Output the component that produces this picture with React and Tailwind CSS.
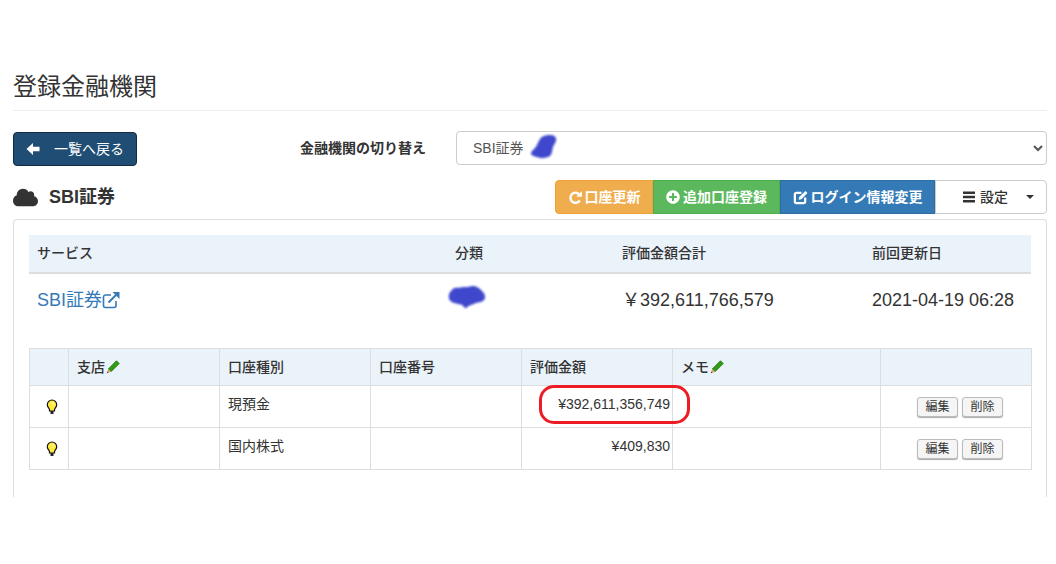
import React from 'react';
import { FaCloud, FaPlusCircle } from 'react-icons/fa';

const font = { fontFamily: '"Liberation Sans", "Noto Sans CJK JP", sans-serif' };

// 黒塗りの代わりの青いにじみ
function Blob({ className, d }) {
  return (
    <svg className={className} viewBox="0 0 40 30" aria-hidden="true">
      <path d={d} fill="#3f48cc" className="blur-[1px]" />
    </svg>
  );
}

function ArrowLeft() {
  return (
    <svg viewBox="0 0 14 14" className="w-[14px] h-[14px]" aria-hidden="true">
      <path d="M0.500 7L7 1v3.800h6.500v4.400H7V13z" fill="currentColor" />
    </svg>
  );
}

function RefreshIcon() {
  return (
    <svg viewBox="0 0 16 16" className="w-[15px] h-[15px]" aria-hidden="true">
      <path d="M12.600 11a5.400 5.400 0 1 1-.3-6" fill="none" stroke="currentColor" strokeWidth="2.600" />
      <path d="M14.800 1.200v6H8.800z" fill="currentColor" />
    </svg>
  );
}

function EditIcon() {
  return (
    <svg viewBox="0 0 16 16" className="w-[15px] h-[15px]" aria-hidden="true">
      <path d="M9 3H3.500A1.500 1.500 0 0 0 2 4.500v8A1.500 1.500 0 0 0 3.500 14h8a1.500 1.500 0 0 0 1.500-1.500V8" fill="none" stroke="currentColor" strokeWidth="2.400" />
      <path d="M13.200 1l2.200 2.200L9 9.800 6 10.400l.6-3z" fill="currentColor" />
    </svg>
  );
}

function BarsIcon() {
  return (
    <svg viewBox="0 0 12 12" className="w-[12px] h-[12px]" aria-hidden="true">
      <path d="M0 0.500h12v2.600H0zM0 4.700h12v2.600H0zM0 8.900h12v2.600H0z" fill="currentColor" />
    </svg>
  );
}

function ExternalIcon() {
  return (
    <svg viewBox="0 0 18 18" className="w-[18px] h-[18px] -mt-[2px]" aria-hidden="true">
      <path d="M9 4H3.500A2 2 0 0 0 1.500 6v8.500a2 2 0 0 0 2 2H12a2 2 0 0 0 2-2V10" fill="none" stroke="#337ab7" strokeWidth="1.600" />
      <path d="M6.500 11.500L14 4" fill="none" stroke="#337ab7" strokeWidth="2" />
      <path d="M10.500 1h7v7z" fill="#337ab7" />
    </svg>
  );
}

function Pencil() {
  return (
    <svg viewBox="0 0 14 14" className="w-[14px] h-[14px] inline-block ml-[1px] -mt-[1px]" aria-hidden="true">
      <path d="M10.500 0.800L13.200 3.500 5 11.700 2.300 9z" fill="#2f9e12" stroke="#1c6b0a" strokeWidth="0.800" />
      <path d="M2.300 9L5 11.700 0.800 13.200z" fill="#e0a36a" />
      <path d="M1.400 11.500L2.500 12.500 0.800 13.200z" fill="#333" />
    </svg>
  );
}

function Bulb() {
  return (
    <svg viewBox="0 0 12 16" className="w-[12px] h-[16px] ml-[16px]" aria-hidden="true">
      <path d="M6 1a4.700 4.700 0 0 0-4.700 4.700c0 2 1.300 3 2.200 4.800v1.500h5v-1.500c.9-1.800 2.200-2.800 2.200-4.800A4.700 4.700 0 0 0 6 1z" fill="#ffe93b" stroke="#111" strokeWidth="1.200" />
      <path d="M5 4.500a1.500 1.500 0 1 1 1.500 2" fill="none" stroke="#fffbd0" strokeWidth="1" />
      <path d="M4.500 12h3v3h-3z" fill="#222" />
    </svg>
  );
}

function SmallButtons() {
  const cls = "w-[41px] h-[20px] rounded-[3px] border border-[#bbb] bg-[#f5f5f5] shadow-[0_1px_1px_#aaa] text-[12px] leading-[18px] text-[#333]";
  return (
    <div className="flex justify-end gap-[4px] pr-[28px] pt-[1px]">
      <button className={cls}>編集</button>
      <button className={cls}>削除</button>
    </div>
  );
}

const thTop = "px-[8px] text-left font-medium text-[14px]";
const thSub = "border border-[#ddd] px-[8px] text-left font-medium text-[14px]";
const td = "border border-[#ddd] px-[8px] pt-[8px] align-top text-[14px] leading-[20px]";

export default function App() {
  return (
    <div style={font} className="w-[1056px] h-[564px] overflow-hidden bg-white text-[#333] pl-[13px] pr-[9px] pt-[70px]">
      <h1 className="text-[24px] leading-[34px] font-normal pb-[6px] border-b border-[#eee]">登録金融機関</h1>

      {/* 切り替え行 */}
      <div className="flex items-start mt-[20px]">
        <button className="mt-[1px] w-[124px] h-[34px] flex items-center pl-[12px] rounded-[4px] bg-[#204d74] border border-[#122b40] text-white text-[14px]">
          <ArrowLeft />
          <span className="ml-[14px]">一覧へ戻る</span>
        </button>
        <label className="ml-auto mt-[7px] text-[14px] leading-[20px] font-bold">金融機関の切り替え</label>
        <div className="relative ml-[30px] w-[591px]">
          <select style={font} className="w-full h-[34px] pl-[12px] rounded-[4px] border border-[#ccc] bg-white text-[#555] text-[14px]">
            <option>SBI証券</option>
          </select>
          <Blob className="absolute left-[68px] top-[-3px] w-[40px] h-[40px]" d="M26 2c4 0 7 2 6 6-1 3-2 3-3 6-1 4-1 9-5 10-4 1-7 2-11 0-3-1-6-1-6-4 1-3 4-4 6-8 2-4 3-8 7-9 2-1 4-1 6-1z" />
        </div>
      </div>

      {/* 口座見出し行 */}
      <div className="flex items-center justify-between mt-[14px] h-[34px]">
        <div className="flex items-center pt-[1px]">
          <FaCloud className="w-[25px] h-[25px] text-[#333]" />
          <span className="ml-[11px] text-[18px] font-bold">SBI証券</span>
        </div>
        <div className="flex text-[14px] font-bold text-white">
          <button className="w-[98px] h-[34px] flex items-center justify-center gap-[2px] rounded-l-[4px] bg-[#f0ad4e] border border-[#eea236]">
            <RefreshIcon />口座更新
          </button>
          <button className="w-[127px] h-[34px] flex items-center justify-center gap-[3px] bg-[#5cb85c] border border-[#4cae4c]">
            <FaPlusCircle className="w-[14px] h-[14px]" />追加口座登録
          </button>
          <button className="w-[155px] h-[34px] flex items-center justify-center gap-[3px] bg-[#337ab7] border border-[#2e6da4]">
            <EditIcon />ログイン情報変更
          </button>
          <button className="w-[112px] h-[34px] flex items-center pl-[27px] rounded-r-[4px] bg-white border border-[#ccc] text-[#333] font-medium">
            <BarsIcon />
            <span className="ml-[5px]">設定</span>
            <span className="ml-[18px] border-x-[4px] border-x-transparent border-t-[4px] border-t-[#333]"></span>
          </button>
        </div>
      </div>

      {/* パネル */}
      <div className="mt-[5px] h-[278px] border-x border-t border-[#ddd] rounded-t-[4px] px-[15px] pt-[15px]">
        <table className="w-full table-fixed border-collapse">
          <colgroup>
            <col className="w-[418px]" />
            <col className="w-[167px]" />
            <col className="w-[250px]" />
            <col className="w-[167px]" />
          </colgroup>
          <thead>
            <tr className="h-[38px] bg-[#eaf2fa] border-b-2 border-[#ddd]">
              <th className={thTop}>サービス</th>
              <th className={thTop}>分類</th>
              <th className={thTop}>評価金額合計</th>
              <th className={thTop}>前回更新日</th>
            </tr>
          </thead>
          <tbody>
            <tr className="h-[54px] text-[18px]">
              <td className="px-[8px]">
                <a className="inline-flex items-center text-[#337ab7]">SBI証券<ExternalIcon /></a>
              </td>
              <td className="pl-[0px]">
                <Blob className="w-[42px] h-[34px] -mt-[5px]" d="M4 8c3-4 6-2 9-3 4-1 6 0 9-1 4-1 7 0 10 3 3 3 5 5 4 9-2 3-5 3-9 4-4 2-7 2-9 5-2-1-3-4-6-4-4-1-8-1-10-5-1-3 0-6 2-8z" />
              </td>
              <td className="px-[8px] whitespace-nowrap">￥392,611,766,579</td>
              <td className="px-[8px] whitespace-nowrap">2021-04-19 06:28</td>
            </tr>
          </tbody>
        </table>

        <table className="mt-[21px] w-full table-fixed border-collapse">
          <colgroup>
            <col className="w-[39px]" />
            <col className="w-[151px]" />
            <col className="w-[151px]" />
            <col className="w-[151px]" />
            <col className="w-[151px]" />
            <col className="w-[208px]" />
            <col className="w-[151px]" />
          </colgroup>
          <thead>
            <tr className="h-[37px] bg-[#eaf2fa]">
              <th className={thSub}></th>
              <th className={thSub}>支店<Pencil /></th>
              <th className={thSub}>口座種別</th>
              <th className={thSub}>口座番号</th>
              <th className={thSub}>評価金額</th>
              <th className={thSub}>メモ<Pencil /></th>
              <th className={thSub}></th>
            </tr>
          </thead>
          <tbody>
            <tr className="h-[42px]">
              <td className="border border-[#ddd] align-top pt-[13px]"><Bulb /></td>
              <td className={td}></td>
              <td className={td}>現預金</td>
              <td className={td}></td>
              <td className="relative border border-[#ddd] pr-[2px] pt-[8px] align-top text-right text-[14px] leading-[20px]">
                ¥392,611,356,749
                <span className="absolute left-[17px] top-[-1px] w-[151px] h-[39px] rounded-[15px] border-[3px] border-[#ed1c24]"></span>
              </td>
              <td className={td}></td>
              <td className="border border-[#ddd]"><SmallButtons /></td>
            </tr>
            <tr className="h-[42px]">
              <td className="border border-[#ddd] align-top pt-[13px]"><Bulb /></td>
              <td className={td}></td>
              <td className={td}>国内株式</td>
              <td className={td}></td>
              <td className="border border-[#ddd] pr-[2px] pt-[8px] align-top text-right text-[14px] leading-[20px]">¥409,830</td>
              <td className={td}></td>
              <td className="border border-[#ddd]"><SmallButtons /></td>
            </tr>
          </tbody>
        </table>
      </div>
    </div>
  );
}
